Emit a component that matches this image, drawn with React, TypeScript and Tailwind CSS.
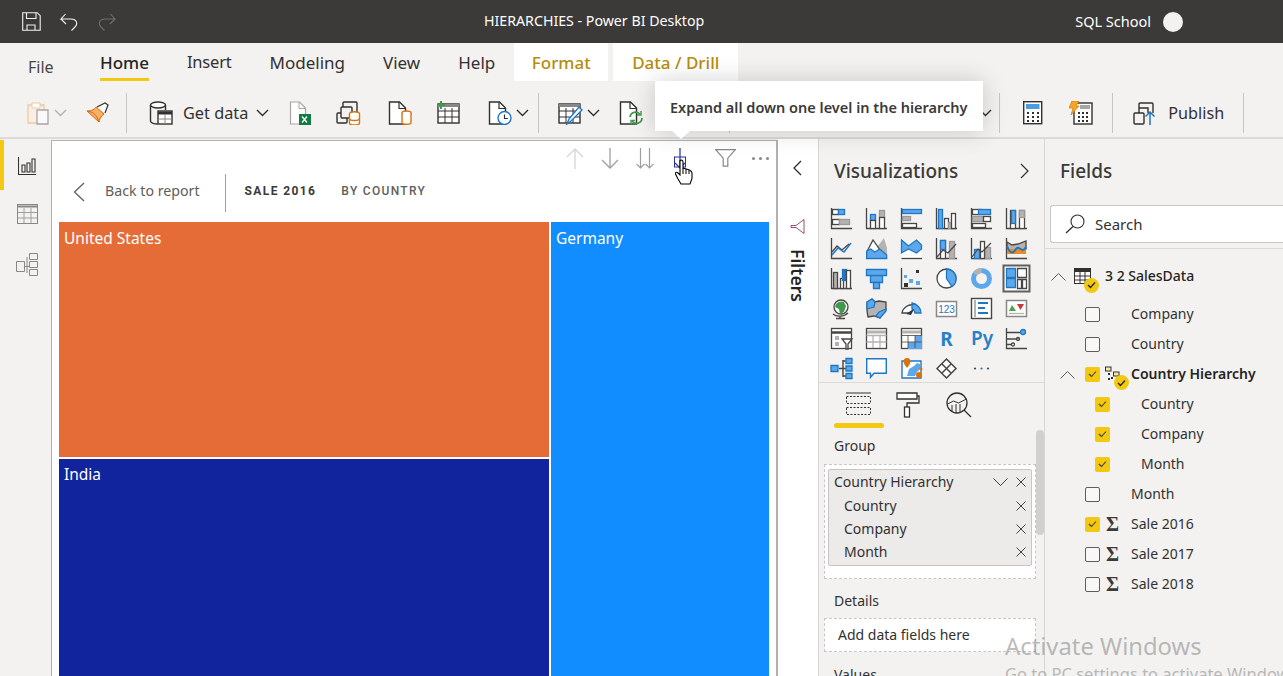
import type { ReactNode } from "react";

const D = "#484644";
const B = "#5ea7ea";
const BS = "#1f77c4";
const G = "#b5b3b1";

type SvgProps = { children: ReactNode; size?: number; box?: number; className?: string };

const Svg = ({ children, size = 21, box = 21, className = "" }: SvgProps) => (
  <svg width={size} height={size} viewBox={`0 0 ${box} ${box}`} fill="none" strokeWidth="1.3" className={`shrink-0 ${className}`}>
    {children}
  </svg>
);

const Axis = () => <path d="M.5 0v20.500H21" stroke={D} />;
const Rc = ({ x, y, w, h, f = "#fff", s = D }: { x: number; y: number; w: number; h: number; f?: string; s?: string }) => (
  <rect x={x + 0.5} y={y + 0.5} width={w} height={h} fill={f} stroke={s} />
);

const vizIcons: ReactNode[] = [
  <><Axis /><Rc x={1} y={1} w={6} h={5} /><Rc x={7} y={1} w={6} h={5} f={B} s={BS} /><Rc x={1} y={11} w={7} h={5} /><Rc x={8} y={11} w={10} h={5} f={G} s="#999" /></>,
  <><Axis /><Rc x={4} y={6} w={5} h={6} f={B} s={BS} /><Rc x={4} y={12} w={5} h={8} /><Rc x={13} y={2} w={5} h={7} f={G} s="#999" /><Rc x={13} y={9} w={5} h={11} /></>,
  <><Axis /><Rc x={1} y={1} w={19} h={4} f={B} s={BS} /><Rc x={1} y={8} w={8} h={4} f={G} s="#999" /><Rc x={1} y={15} w={14} h={4} /></>,
  <><Axis /><Rc x={2} y={1} w={4} h={19} f={B} s={BS} /><Rc x={8} y={10} w={4} h={10} /><Rc x={12} y={14} w={3} h={6} f={G} s="#999" /><Rc x={15} y={5} w={4} h={15} /></>,
  <><Axis /><Rc x={1} y={1} w={9} h={5} /><Rc x={7} y={1} w={12} h={5} f={B} s={BS} /><Rc x={1} y={8} w={11} h={5} f={G} s="#999" /><Rc x={12} y={8} w={7} h={5} /><Rc x={1} y={15} w={13} h={4} /></>,
  <><Axis /><Rc x={4} y={2} w={5} h={18} /><Rc x={5} y={2} w={4} h={13} f={B} s={BS} /><Rc x={13} y={2} w={5} h={18} /><Rc x={13} y={2} w={5} h={7} f={G} s="#999" /></>,
  <><Axis /><path d="M1 14l5-6 5 4 7-6" stroke={D} /><path d="M1 17l6-7 6 4 7-9" stroke={BS} strokeWidth="1.400" /></>,
  <><path d="M12 8l6-8 3 10v10h-9z" fill={G} /><path d="M.7 14L7 2l7 10v8H.7z" fill="#fff" stroke={D} /><path d="M.7 13l4-2 4 3 5-3 7 6v3.500H.7z" fill={B} stroke={BS} /></>,
  <><path d="M.5 15l7-4 8 4 5-4v9.500H.5z" fill="#fff" /><path d="M.5 2l7 6 8-6 5 5v4l-5 4-8-4-7 4z" fill={B} stroke={BS} /><path d="M.5 20.500H21" stroke={D} /></>,
  <><Axis /><Rc x={4} y={2} w={5} h={18} /><Rc x={4} y={2} w={5} h={9} f={B} s={BS} /><Rc x={13} y={3} w={5} h={17} f={G} s="#999" /><path d="M1 19l6-7 5 3 8-9" stroke={D} strokeWidth="1.200" /></>,
  <><Axis /><Rc x={3} y={11} w={5} h={9} f={B} s={BS} /><Rc x={9} y={3} w={4} h={17} /><Rc x={14} y={9} w={5} h={11} f={G} s="#999" /><path d="M1 19l6-8 4 3 9-9" stroke={D} strokeWidth="1.200" /></>,
  <><Axis /><path d="M1 4l5 3 6-1 8-3v8l-8 3-6-2-5 2z" fill={G} stroke={D} /><path d="M1 11h19v5H1z" fill="#ee8a1f" /><path d="M1 8c3 8 6 8 9 3s6 6 10-2" stroke={BS} strokeWidth="2" /></>,
  <><Axis /><Rc x={2} y={4} w={4} h={16} f={G} s={D} /><Rc x={9} y={10} w={3} h={10} /><Rc x={11} y={1} w={4} h={11} f={BS} s={BS} /><Rc x={15} y={2} w={4} h={18} /></>,
  <><path d="M.5 1.500h20v6h-20zM4.500 7.500h12v7h-12z" fill={B} stroke={BS} /><path d="M7.500 14.500h6v6h-6z" fill={B} stroke={BS} /></>,
  <><Axis /><rect x="3" y="7" width="3" height="3" fill={B} /><rect x="8" y="11" width="4" height="4" fill={B} /><rect x="15" y="13" width="4" height="4" fill={B} /><rect x="3" y="15" width="4" height="4" fill="#333" /><rect x="15" y="2" width="3" height="3" fill="#333" /></>,
  <><circle cx="10.500" cy="10.500" r="9.500" fill="#fff" stroke={D} /><path d="M10.500 1A9.500 9.500 0 0 1 20 10.500a9 9 0 0 1-4 8L10.500 10.500z" fill={B} stroke={BS} /></>,
  <><circle cx="10.500" cy="10.500" r="8" stroke={B} strokeWidth="5" /><path d="M10.500 2.500A8 8 0 0 0 4 6" stroke={G} strokeWidth="5" /></>,
  <><rect x="-2.500" y="-2.500" width="26" height="26" fill="#fff" stroke="#605e5c" strokeWidth="2" /><path d="M.5.500h9v9h-9zM.5 10.500h9v9h-9z" fill={B} stroke={BS} /><path d="M11.500.5h9v9h-9zM11.500 11.500h4v9h-4zM16.500 11.500h4v9h-4z" fill="#fff" stroke={D} /></>,
  <><circle cx="10" cy="9" r="7" fill="#fff" stroke={D} /><path d="M5 6c3-3 6-3 8-2l2 4-2 6-4 2-1-5-4-2z" fill="#3f9a4b" /><path d="M2 16c3 3 11 3 15-1M9 18v2M5 20.500h9" stroke={D} strokeWidth="1.300" /></>,
  <><path d="M1 4l5-3 3 3 4-1 7 1v8l-6 8-6-2-6 1-1-6z" fill={G} stroke={D} /><path d="M1 4l5-3 3 3-1 5-7 2z" fill={B} stroke={BS} /><path d="M13 14l7-3v2l-6 7-4-2z" fill={B} stroke={BS} /></>,
  <><path d="M1 15a10 10 0 0 1 12-8l-1 5-4 3H1z" fill="#fff" stroke={D} /><path d="M11 5c5 1 9 5 9 10h-6c0-2-1-3-3-4z" fill={B} stroke={BS} /><path d="M5 16l8-5-3 6z" fill="#333" /></>,
  <><rect x=".5" y="3.500" width="20" height="15" fill="#fff" stroke="#8a8886" strokeWidth="1.500" /><text x="10.500" y="15" textAnchor="middle" fontSize="10" fill={BS} fontFamily="Liberation Sans, sans-serif">123</text></>,
  <><rect x=".5" y=".5" width="20" height="20" fill="#fff" stroke={D} strokeWidth="1.400" /><path d="M4 2v17" stroke={G} strokeWidth="2" /><path d="M7 5h10M7 10h7M7 15h10" stroke={BS} strokeWidth="2" /></>,
  <><rect x=".5" y="2.500" width="20" height="16" fill="#fff" stroke="#8a8886" strokeWidth="1.500" /><path d="M3 13l3-6 4 6z" fill="#4fa04f" /><path d="M11 6h7l-3.500 6z" fill="#d13438" /><path d="M3 15.500h15" stroke={G} /></>,
  <><rect x=".5" y=".5" width="20" height="20" fill="#fff" stroke={D} strokeWidth="1.300" /><path d="M1 4.500h19" stroke={D} strokeWidth="2.500" /><path d="M4 8h4v4H4zM4 14h4v4H4z" fill={G} /><path d="M11 11h10l-4 5v5h-2v-5z" fill="#fff" stroke={D} /></>,
  <><rect x=".5" y=".5" width="20" height="20" fill="#fff" stroke={D} /><path d="M1 4h19" stroke={G} strokeWidth="3" /><path d="M.5 7.500h20M.5 14h20M7 7v13M14 7v13" stroke={G} /></>,
  <><rect x=".5" y=".5" width="20" height="20" fill="#fff" stroke={D} /><path d="M1 4h19" stroke={G} strokeWidth="3" /><path d="M7 14h14v7H7zM14 7.500h7V14h-7z" fill={B} /><path d="M.5 7.500h20M.5 14h20M7 7v13M14 7v13" stroke={D} strokeWidth=".8" /></>,
  <><text x="10.500" y="18" textAnchor="middle" fontSize="19" fontWeight="700" fill="#2680c9" fontFamily="Noto Sans, sans-serif">R</text></>,
  <><text x="11" y="17" textAnchor="middle" fontSize="19" fontWeight="600" fill="#2680c9" fontFamily="Noto Sans, sans-serif">Py</text></>,
  <><path d="M.5 0v20.500H21M1 4.500h14M1 11h10M1 16.500h6" stroke={D} /><circle cx="17" cy="4" r="2.500" fill={B} stroke={BS} /><circle cx="12" cy="11" r="1.500" fill={G} stroke={D} /><circle cx="7" cy="16.500" r="1.500" fill="#fff" stroke={D} /></>,
  <><path d="M8 10.500h4M12 2v17M12 3h3M12 10.500h3M12 18h3" stroke={D} strokeWidth="1.400" /><path d="M0 7.500h7v6H0zM15 .5h6v5h-6zM15 8h6v5h-6zM15 15.500h6v5h-6z" fill={B} stroke={BS} /></>,
  <><path d="M.7.7h19.600v14.600H8l-3.500 4v-4H.7z" fill="#fff" stroke={BS} strokeWidth="1.400" /></>,
  <><path d="M1 3h19v17H1z" fill="#fff" stroke={BS} strokeWidth="1.400" /><path d="M8 11l5-3 3-3 3 1v5l-3 3-2 4H6z" fill={B} /><path d="M6 0a3.500 3.500 0 0 1 3.500 3.500C9.500 6 6 10 6 10S2.500 6 2.500 3.500A3.500 3.500 0 0 1 6 0z" fill="#d9730d" /><circle cx="18" cy="17" r="3" fill="#d9730d" /><circle cx="20" cy="11" r="1.500" fill="#d9730d" /></>,
  <><path d="M10.500 1L20 10.500 10.500 20 1 10.500z" fill="#fff" stroke={D} strokeWidth="1.500" /><path d="M6 6l9 9M15 6l-9 9" stroke={D} strokeWidth="1.500" /></>,
  <><circle cx="4" cy="10.500" r="1.100" fill={D} /><circle cx="10.500" cy="10.500" r="1.100" fill="#1f77c4" /><circle cx="17" cy="10.500" r="1.100" fill={D} /></>,
];

const Chevron = ({ color = "#323130", className = "" }: { color?: string; className?: string }) => (
  <svg width="13" height="8" viewBox="0 0 13 8" fill="none" className={`shrink-0 ${className}`}>
    <path d="M1 1l5.500 5.500L12 1" stroke={color} strokeWidth="1.400" />
  </svg>
);

const ChevronUp = () => (
  <svg width="15" height="9" viewBox="0 0 15 9" fill="none" className="shrink-0">
    <path d="M.5 8.500l7-7 7 7" stroke="#605e5c" />
  </svg>
);

const Sep = ({ className = "" }: { className?: string }) => <div className={`h-[40px] w-px shrink-0 bg-[#c8c6c4] ${className}`} />;

const Doc = ({ children }: { children?: ReactNode }) => (
  <svg width="24" height="24" viewBox="0 0 24 24" fill="none" className="shrink-0">
    <path d="M1.500 1h10l6 6v16h-16z" fill="#fff" stroke="#323130" strokeWidth="1.400" />
    <path d="M11 1v6.500h6.500" stroke="#323130" strokeWidth="1.200" />
    {children}
  </svg>
);

const Box = ({ x, y, w = 9, h = 9 }: { x: number; y: number; w?: number; h?: number }) => (
  <rect x={x} y={y} width={w} height={h} rx="1" fill="#f3f2f1" stroke="#323130" strokeWidth="1.400" />
);

const TableGlyph = ({ s = "#323130" }: { s?: string }) => (
  <>
    <rect x="1" y="3" width="21" height="19" fill="#fff" stroke={s} strokeWidth="1.400" />
    <path d="M1 4.500h21" stroke="#8a8886" strokeWidth="3" />
    <path d="M1 10h21M1 16h21M8 7v15M15 7v15" stroke={s} />
  </>
);

const Toolbar = () => (
  <div className="flex h-[58px] items-center border-b-2 border-[#dcdad8] pl-[26px] pt-[8px]">
    <svg width="24" height="24" viewBox="0 0 24 24" fill="none" className="shrink-0">
      <path d="M2 4h16v18H2z" fill="#fbeee2" stroke="#f0c9a4" strokeWidth="1.300" />
      <path d="M6 2h8v5H6z" fill="#fff" stroke="#f0c9a4" />
      <path d="M11 9h11v14H11z" fill="#fafafa" stroke="#a8a6a4" strokeWidth="1.300" />
    </svg>
    <Chevron color="#b3b1af" className="ml-[4px]" />
    <svg width="24" height="22" viewBox="0 0 24 22" fill="none" className="ml-[19px] shrink-0">
      <path d="M1 9c5 0 8-2 9-4l8 7c-3 2-5 6-5 8z" fill="#f7b267" stroke="#d46b08" />
      <path d="M1 9c5 1 9 2 12 11" stroke="#d46b08" />
      <path d="M11 5l8-4 3 2-3 8" fill="#fff" stroke="#323130" strokeWidth="1.200" />
    </svg>
    <Sep className="ml-[16px]" />
    <svg width="24" height="24" viewBox="0 0 24 24" fill="none" className="ml-[22px] shrink-0">
      <ellipse cx="9" cy="4" rx="7.500" ry="3" fill="#fff" stroke="#323130" strokeWidth="1.400" />
      <path d="M1.500 4v16c0 1.500 3 3 7 3M16.500 4v5" stroke="#323130" strokeWidth="1.400" />
      <rect x="9" y="10" width="14" height="13" fill="#fff" stroke="#323130" strokeWidth="1.400" />
      <path d="M9 12h14" stroke="#323130" strokeWidth="3" />
      <path d="M16 13v10M9 18h14" stroke="#8a8886" />
    </svg>
    <span className="ml-[10px] text-[16.300px] leading-none text-[#323130]">Get data</span>
    <Chevron className="ml-[8px]" />
    <div className="ml-[20px]">
      <svg width="22" height="24" viewBox="0 0 22 24" fill="none" className="shrink-0">
        <path d="M1.500 1h9l6 6v16h-15z" fill="#fff" stroke="#a8a6a4" strokeWidth="1.200" />
        <path d="M10 1v6.500h6.500" stroke="#a8a6a4" />
        <rect x="10" y="13" width="12" height="11" fill="#107c41" />
        <path d="M13 15.500l5 6M18 15.500l-5 6" stroke="#fff" strokeWidth="1.300" />
      </svg>
    </div>
    <svg width="25" height="24" viewBox="0 0 25 24" fill="none" className="ml-[25px] shrink-0">
      <Box x={1} y={12} w={10} h={10} />
      <Box x={7} y={1} w={14} h={12} />
      <Box x={5} y={6} w={11} h={11} />
      <ellipse cx="18.500" cy="13" rx="5" ry="2.200" fill="#fff" stroke="#d9730d" strokeWidth="1.400" />
      <path d="M13.500 13v9c0 1 2 2 5 2s5-1 5-2v-9M13.500 17.500c0 1 2 2 5 2s5-1 5-2" fill="#fff" stroke="#d9730d" strokeWidth="1.400" />
    </svg>
    <div className="ml-[27px]">
      <Doc>
        <ellipse cx="18.500" cy="12" rx="4.500" ry="2" fill="#fff" stroke="#d9730d" strokeWidth="1.400" />
        <path d="M14 12v9.500c0 1 2 1.800 4.500 1.800s4.500-.8 4.500-1.800V12" fill="#fff" stroke="#d9730d" strokeWidth="1.400" />
      </Doc>
    </div>
    <svg width="24" height="24" viewBox="0 0 24 24" fill="none" className="ml-[25px] shrink-0">
      <TableGlyph />
      <path d="M4 0v8M0 4h8" stroke="#3f9a4b" strokeWidth="2" />
    </svg>
    <div className="ml-[27px]">
      <Doc>
        <circle cx="16.500" cy="17" r="6.500" fill="#fff" stroke="#1f77c4" strokeWidth="1.400" />
        <path d="M16.500 13.500V17.500h3.500" stroke="#323130" strokeWidth="1.200" />
      </Doc>
    </div>
    <Chevron className="ml-[4px]" />
    <Sep className="ml-[9px]" />
    <svg width="25" height="24" viewBox="0 0 25 24" fill="none" className="ml-[19px] shrink-0">
      <TableGlyph />
      <path d="M9 23l2-5L21 6l3 3-11 11z" fill="#fff" stroke="#1f77c4" strokeWidth="1.400" />
    </svg>
    <Chevron className="ml-[4px]" />
    <div className="ml-[19px]">
      <Doc>
        <path d="M11 16a5.500 5.500 0 0 1 10-2.500M23 17a5.500 5.500 0 0 1-10 3" stroke="#3f9a4b" strokeWidth="1.800" />
        <path d="M22 10v4h-4M12 23.500v-4h4" stroke="#3f9a4b" strokeWidth="1.400" />
      </Doc>
    </div>
    <Sep className="ml-[86px]" />
    <Chevron className="ml-[249px]" />
    <Sep className="ml-[7px]" />
    <svg width="20" height="24" viewBox="0 0 20 24" fill="none" className="ml-[23px] shrink-0">
      <rect x=".7" y=".7" width="18" height="22" fill="#fff" stroke="#323130" strokeWidth="1.400" />
      <rect x="3" y="3" width="13.500" height="5" fill="#4a9de0" />
      <path d="M4 11h2v2H4zM9 11h2v2H9zM14 11h2v2h-2zM4 15h2v2H4zM9 15h2v2H9zM14 15h2v2h-2zM4 19h2v2H4zM9 19h2v2H9zM14 19h2v2h-2z" fill="#323130" />
    </svg>
    <svg width="24" height="24" viewBox="0 0 24 24" fill="none" className="ml-[26px] shrink-0">
      <rect x="5" y="2" width="18" height="21" fill="#fff" stroke="#323130" strokeWidth="1.400" />
      <rect x="11" y="4" width="10" height="4" fill="#a8a6a4" />
      <path d="M9 11h2v2H9zM13 11h2v2h-2zM17 11h2v2h-2zM9 15h2v2H9zM13 15h2v2h-2zM17 15h2v2h-2zM9 19h2v2H9zM13 19h2v2h-2zM17 19h2v2h-2z" fill="#323130" />
      <path d="M3 0h7L7 5h3l-8 9 2-7H0z" fill="#f7a823" stroke="#d9730d" strokeWidth=".7" />
    </svg>
    <Sep className="ml-[19px]" />
    <svg width="24" height="24" viewBox="0 0 24 24" fill="none" className="ml-[20px] shrink-0">
      <Box x={1} y={12} w={10} h={11} />
      <path d="M6 12V3a1 1 0 0 1 1-1h12a1 1 0 0 1 1 1v9" stroke="#323130" strokeWidth="1.400" />
      <path d="M6 7h9v5" stroke="#323130" strokeWidth="1.400" />
      <path d="M17 24V11M12.500 15.500L17 11l4.500 4.500" stroke="#1f77c4" strokeWidth="1.500" />
    </svg>
    <span className="ml-[11px] text-[16.200px] leading-none text-[#323130]">Publish</span>
    <Sep className="ml-[19px]" />
  </div>
);

const Check = ({ on, className = "" }: { on?: boolean; className?: string }) =>
  on ? (
    <div className={`flex size-[15px] shrink-0 items-center justify-center rounded-[2px] bg-[#f2c811] ${className}`}>
      <svg width="9" height="8" viewBox="0 0 9 8" fill="none">
        <path d="M1 4l2.500 2.500L8 1.500" stroke="#3b3a39" strokeWidth="1.100" />
      </svg>
    </div>
  ) : (
    <div className={`size-[15px] shrink-0 rounded-[2px] border border-[#605e5c] bg-[#f8f8f8] ${className}`} />
  );

const Badge = () => (
  <div className="absolute bottom-[-8px] right-[-8px] flex size-[15px] items-center justify-center rounded-full bg-[#f2c811]">
    <svg width="9" height="8" viewBox="0 0 9 8" fill="none">
      <path d="M1 4l2.500 2.500L8 1.500" stroke="#252423" strokeWidth="1.300" />
    </svg>
  </div>
);

const Sigma = () => <span className="mr-[9px] font-['Liberation_Serif',serif] text-[20px] font-bold leading-none text-[#3b3a39]">Σ</span>;

const Field = ({ label, on, child, icon, chevron, bold }: { label: string; on?: boolean; child?: boolean; icon?: ReactNode; chevron?: boolean; bold?: boolean }) => (
  <div className={`flex h-[30px] items-center ${child ? "pl-[10px]" : ""}`}>
    <div className="flex w-[40px] shrink-0 justify-end pr-[10px]">{chevron && <ChevronUp />}</div>
    <Check on={on} />
    <div className="flex w-[31px] shrink-0 justify-center pl-[3px]">{icon}</div>
    <span className={`text-[14px] leading-none ${bold ? "font-semibold text-[#252423]" : "text-[#323130]"}`}>{label}</span>
  </div>
);

const Cross = () => (
  <svg width="10" height="10" viewBox="0 0 10 10" fill="none" className="shrink-0">
    <path d="M.5.500l9 9M9.500.500l-9 9" stroke="#323130" strokeWidth=".9" />
  </svg>
);

const WellRow = ({ label }: { label: string }) => (
  <div className="flex h-[23px] items-center justify-between pl-[15px] pr-[5px]">
    <span className="text-[14px] leading-none text-[#323130]">{label}</span>
    <Cross />
  </div>
);

const VizPane = () => (
  <div className="relative w-[227px] shrink-0 border-x border-[#d8d6d4] bg-[#f3f2f1] pt-[20px]">
    <div className="flex h-[24px] items-center justify-between pl-[15px] pr-[15px]">
      <span className="text-[19px] font-medium leading-none text-[#3b3a39]">Visualizations</span>
      <svg width="9" height="16" viewBox="0 0 9 16" fill="none"><path d="M1 1l7 7-7 7" stroke="#323130" strokeWidth="1.200" /></svg>
    </div>
    <div className="ml-[5px] mt-[20px] grid grid-cols-[repeat(6,35px)] auto-rows-[30px]">
      {vizIcons.map((icon, i) => (
        <div key={i} className="flex items-center justify-center">
          <Svg className="overflow-visible">{icon}</Svg>
        </div>
      ))}
    </div>
    <div className="mt-[-1px] border-b border-[#dcdad8]" />
    <div className="flex h-[46px] items-start pl-[15px] pt-[9px]">
      <div className="flex w-[50px] flex-col items-center">
        <svg width="26" height="26" viewBox="0 0 26 26" fill="none">
          <path d="M0 1h25" stroke="#323130" />
          <path d="M.5 4.500h24v7h-24zM.5 15.500h24v7h-24z" stroke="#323130" strokeDasharray="2 1.500" />
        </svg>
        <div className="mt-[5px] h-[5px] w-[50px] rounded-full bg-[#f2c811]" />
      </div>
      <svg width="24" height="26" viewBox="0 0 24 26" fill="none" className="ml-[12px]">
        <path d="M1 1h20v6H1z" fill="#fff" stroke="#323130" strokeWidth="1.300" />
        <path d="M21 4h2v7H11v5" stroke="#323130" strokeWidth="1.300" />
        <rect x="8.500" y="15" width="5" height="10" fill="#fff" stroke="#323130" strokeWidth="1.300" />
      </svg>
      <svg width="26" height="26" viewBox="0 0 26 26" fill="none" className="ml-[26px]">
        <circle cx="11" cy="11" r="10" fill="#f3f2f1" stroke="#323130" strokeWidth="1.300" />
        <path d="M1.500 12l6-3 5 2 8-4" stroke="#323130" />
        <path d="M6 13v7M10 12v9M14 12v8" stroke="#323130" />
        <path d="M18 18l7 7" stroke="#323130" strokeWidth="1.300" />
      </svg>
    </div>
    <div className="ml-[15px] mt-[7px] text-[14px] leading-[20px] text-[#323130]">Group</div>
    <div className="ml-[5px] mt-[8px] h-[115px] w-[212px] border border-dashed border-[#c8c6c4] bg-white p-[3px] pt-[4px]">
      <div className="h-[97px] rounded-[2px] border border-[#c8c6c4] bg-[#edebe9]">
        <div className="flex h-[24px] items-center justify-between pl-[5px] pr-[5px]">
          <span className="text-[14px] leading-none text-[#323130]">Country Hierarchy</span>
          <div className="flex items-center gap-[8px]">
            <svg width="15" height="8" viewBox="0 0 15 8" fill="none"><path d="M.5.500l7 7 7-7" stroke="#323130" strokeWidth=".9" /></svg>
            <Cross />
          </div>
        </div>
        <WellRow label="Country" />
        <WellRow label="Company" />
        <WellRow label="Month" />
      </div>
    </div>
    <div className="ml-[15px] mt-[12px] text-[14px] leading-[20px] text-[#323130]">Details</div>
    <div className="ml-[5px] mt-[7px] flex h-[34px] w-[212px] items-center border border-dashed border-[#c8c6c4] bg-white pl-[13px]">
      <span className="text-[14px] leading-none text-[#323130]">Add data fields here</span>
    </div>
    <div className="ml-[15px] mt-[13px] text-[14px] leading-[20px] text-[#323130]">Values</div>
    <div className="absolute right-0 top-[291px] h-[105px] w-[8px] rounded-[4px] bg-[#d2d0ce]" />
  </div>
);

const FieldsPane = () => (
  <div className="flex-1 bg-[#f3f2f1] pt-[20px]">
    <div className="flex h-[24px] items-center pl-[15px] text-[19px] font-medium leading-none text-[#3b3a39]">Fields</div>
    <div className="ml-[5px] mt-[22px] flex h-[38px] items-center rounded-l-[3px] border border-r-0 border-[#c8c6c4] bg-white pl-[14px]">
      <svg width="20" height="20" viewBox="0 0 20 20" fill="none">
        <circle cx="12.500" cy="7.500" r="6.500" stroke="#323130" strokeWidth="1.100" />
        <path d="M8 12.500L1 19" stroke="#323130" strokeWidth="1.300" />
      </svg>
      <span className="ml-[10px] text-[15px] leading-none text-[#323130]">Search</span>
    </div>
    <div className="mt-[5px] border-b border-[#dcdad8]" />
    <div className="mt-[12px] flex h-[30px] items-center">
      <div className="flex w-[21px] justify-end"><ChevronUp /></div>
      <div className="relative ml-[8px] size-[17px]">
        <svg width="17" height="17" viewBox="0 0 17 17" fill="none">
          <rect x=".5" y=".5" width="16" height="15" fill="#fff" stroke="#323130" />
          <path d="M1 2.500h15" stroke="#323130" strokeWidth="3" />
          <path d="M1 8h15M1 12h15M6 4v12M11 4v12" stroke="#323130" />
        </svg>
        <Badge />
      </div>
      <span className="ml-[14px] text-[14px] font-medium leading-none text-[#252423]">3 2 SalesData</span>
    </div>
    <div className="mt-[8px]">
      <Field label="Company" />
      <Field label="Country" />
      <Field
        label="Country Hierarchy"
        on
        chevron
        bold
        icon={
          <div className="relative mr-[8px] size-[16px]">
            <svg width="16" height="16" viewBox="0 0 16 16" fill="none">
              <rect x=".5" y="1" width="5.500" height="4" fill="#f8e9a8" stroke="#323130" />
              <rect x="8.500" y="6" width="5.500" height="4" fill="#f8e9a8" stroke="#323130" />
              <path d="M3 7h2v2H3zM3 12h2v2H3zM6 11h2v2H6z" fill="#323130" />
            </svg>
            <Badge />
          </div>
        }
      />
      <Field label="Country" on child />
      <Field label="Company" on child />
      <Field label="Month" on child />
      <Field label="Month" />
      <Field label="Sale 2016" on icon={<Sigma />} />
      <Field label="Sale 2017" icon={<Sigma />} />
      <Field label="Sale 2018" icon={<Sigma />} />
    </div>
  </div>
);

const App = () => (
  <div className="relative h-[676px] w-[1283px] overflow-hidden bg-[#f3f2f1] font-['Noto_Sans','Open_Sans',sans-serif]">
    {/* title bar */}
    <div className="flex h-[43px] items-center bg-[#3b3a38] pl-[22px] text-white">
      <svg width="19" height="19" viewBox="0 0 19 19" fill="none">
        <path d="M.7.700h14.500l3 3v14.600H.7zM4.500 1v5.500h9.500V1M5 18v-5h8v5" stroke="#f3f2f1" strokeWidth="1.100" />
      </svg>
      <svg width="18" height="18" viewBox="0 0 18 18" fill="none" className="ml-[19px]">
        <path d="M5.500 1L1 6h10c6 0 7 5 4 8l-3.500 3.500M1 6l5 5" stroke="#f3f2f1" strokeWidth="1.100" />
      </svg>
      <svg width="18" height="18" viewBox="0 0 18 18" fill="none" className="ml-[20px]">
        <path d="M12.500 1L17 6H7c-6 0-7 5-4 8l3.500 3.500M17 6l-5 5" stroke="#6f6d6b" strokeWidth="1.100" />
      </svg>
      <span className="ml-[368px] text-[14.200px] leading-none">HIERARCHIES - Power BI Desktop</span>
      <span className="ml-auto text-[14.500px] leading-none">SQL School</span>
      <div className="ml-[12px] mr-[100px] size-[20px] rounded-full bg-[#f3f2f1]" />
    </div>
    {/* ribbon tabs */}
    <div className="flex h-[38px] items-stretch text-[#323130]">
      <div className="ml-[28px] flex w-[72px] items-center pt-[10px] text-[16px] leading-none text-[#484644]">File</div>
      <div className="relative flex items-center text-[17px] font-medium leading-none text-[#252423]">
        Home
        <div className="absolute bottom-0 left-0 h-[3px] w-full bg-[#f2c811]" />
      </div>
      <div className="ml-[38px] flex items-center text-[16.500px] leading-none tracking-[-0.2px]">Insert</div>
      <div className="ml-[38px] flex items-center text-[17px] leading-none">Modeling</div>
      <div className="ml-[38px] flex items-center text-[17px] leading-none">View</div>
      <div className="ml-[38px] flex items-center text-[17px] leading-none">Help</div>
      <div className="ml-[19px] flex w-[94px] items-center justify-center bg-white text-[17px] font-medium leading-none text-[#b58d10]">Format</div>
      <div className="ml-[5px] flex w-[125px] items-center justify-center bg-white text-[17px] font-medium leading-none text-[#b58d10]">Data / Drill</div>
    </div>
    <Toolbar />
    {/* main area */}
    <div className="flex h-[537px]">
      <div className="relative flex w-[51px] shrink-0 flex-col items-center pl-[3px] pt-[18px]">
        <div className="absolute left-0 top-[1px] h-[50px] w-[4px] bg-[#f2c811]" />
        <svg width="18" height="18" viewBox="0 0 18 18" fill="none">
          <path d="M.5 0v17.500H18M4 8h3v7H4zM9 6h3v9H9zM14 2h3v13h-3z" stroke="#323130" strokeWidth="1.100" />
        </svg>
        <svg width="21" height="20" viewBox="0 0 21 20" fill="none" className="mt-[29px]">
          <rect x=".5" y=".5" width="20" height="19" stroke="#8a8886" />
          <path d="M1 2.500h19" stroke="#8a8886" strokeWidth="2" />
          <path d="M1 8.500h19M1 14h19M7 4v15M14 4v15" stroke="#a19f9d" />
        </svg>
        <svg width="23" height="23" viewBox="0 0 23 23" fill="none" className="mt-[29px]">
          <path d="M.5 8.500h8v10h-8zM13.500.5h8v6h-8zM13.500 8.500h8v6h-8zM13.500 16.500h8v6h-8zM8.500 13.500h5M11 4v16" stroke="#8a8886" />
        </svg>
      </div>
      {/* canvas */}
      <div className="mt-[1px] flex w-[727px] shrink-0 flex-col border-l border-r-2 border-t border-l-[#b3b1af] border-r-[#b3b1af] border-t-[#b3b1af] bg-white">
        <div className="flex h-[34px] shrink-0 items-center pl-[514px]">
          <svg width="18" height="21" viewBox="0 0 18 21" fill="none"><path d="M9 21V1M1 9l8-8 8 8" stroke="#d8d6d4" strokeWidth="1.300" /></svg>
          <svg width="18" height="21" viewBox="0 0 18 21" fill="none" className="ml-[17px]"><path d="M9 0v20M1 12l8 8 8-8" stroke="#a19f9d" strokeWidth="1.300" /></svg>
          <svg width="18" height="21" viewBox="0 0 18 21" fill="none" className="ml-[17px]">
            <path d="M4.500 0v20M.5 16l4 4 4-4M13.500 0v20M9.500 16l4 4 4-4" stroke="#a19f9d" strokeWidth="1.200" />
          </svg>
          <svg width="16" height="21" viewBox="0 0 16 21" fill="none" className="ml-[18px]">
            <path d="M8 0v19M3 15l5 5 5-5" stroke="#2b2f9e" strokeWidth="1.200" />
            <rect x="2.500" y="9" width="11" height="10" stroke="#2b2f9e" />
          </svg>
          <svg width="21" height="18" viewBox="0 0 21 18" fill="none" className="ml-[27px]"><path d="M.7.700h19.600l-7.500 8.500v8h-4.600v-8z" stroke="#8a8886" strokeWidth="1.200" /></svg>
          <div className="ml-[16px] flex gap-[4px]">
            <div className="size-[3px] rounded-full bg-[#8a8886]" />
            <div className="size-[3px] rounded-full bg-[#8a8886]" />
            <div className="size-[3px] rounded-full bg-[#8a8886]" />
          </div>
        </div>
        <div className="-mt-[1px] flex h-[38px] shrink-0 items-center pl-[21px]">
          <svg width="12" height="20" viewBox="0 0 12 20" fill="none" className="mb-[2px]"><path d="M11 1L1.500 10l9.500 9" stroke="#605e5c" strokeWidth="1.300" /></svg>
          <span className="mb-[4px] ml-[20px] text-[14.200px] leading-none text-[#605e5c]">Back to report</span>
          <div className="ml-[25px] h-[38px] w-px bg-[#a19f9d]" />
          <span className="mb-[4px] ml-[19px] font-['Roboto',sans-serif] text-[12px] font-bold leading-none tracking-[1.400px] text-[#3b3a39]">SALE 2016</span>
          <span className="mb-[4px] ml-[25px] font-['Roboto',sans-serif] text-[12px] font-medium leading-none tracking-[1.300px] text-[#605e5c]">BY COUNTRY</span>
        </div>
        <div className="mt-[10px] flex flex-1 gap-[2px] pl-[7px] pr-[7px] text-[15.500px] leading-none text-white">
          <div className="flex w-[490px] flex-col gap-[2px]">
            <div className="h-[235px] bg-[#e66c37] pl-[5px] pt-[9px]">United States</div>
            <div className="flex-1 bg-[#12239e] pl-[5px] pt-[8px]">India</div>
          </div>
          <div className="flex-1 bg-[#118dff] pl-[5px] pt-[9px]">Germany</div>
        </div>
      </div>
      {/* filters */}
      <div className="flex w-[40px] shrink-0 flex-col items-center bg-white pt-[21px]">
        <svg width="9" height="16" viewBox="0 0 9 16" fill="none" className="mr-[2px]"><path d="M8 1L1 8l7 7" stroke="#252423" strokeWidth="1.200" /></svg>
        <svg width="15" height="15" viewBox="0 0 15 15" fill="none" className="ml-[-2px] mt-[43px]"><path d="M14 .5v14L6 8.500H1v-2h5z" stroke="#8b3a62" strokeWidth=".9" /></svg>
        <span className="ml-[-1px] mt-[15px] text-[17.500px] font-semibold leading-none text-[#252423] [writing-mode:vertical-rl]">Filters</span>
      </div>
      <VizPane />
      <FieldsPane />
    </div>

    {/* tooltip over the ribbon */}
    <div className="absolute left-[655px] top-[81px] flex h-[50px] w-[328px] items-center bg-white pl-[15px] pt-[2px] text-[14.500px] font-semibold leading-none text-[#3b3a39] shadow-[0_0_24px_rgba(0,0,0,0.18)]">
      Expand all down one level in the hierarchy
    </div>
    <div className="absolute left-[672px] top-[131px] size-0 border-x-[9px] border-t-[8px] border-x-transparent border-t-white" />
    {/* hand cursor */}
    <svg width="18" height="26" viewBox="0 0 18 26" fill="none" className="absolute left-[675px] top-[159px]">
      <path d="M5 1.500c1.500-1 3 0 3 1.500v6l5 1.500c2.500.7 4 1.500 4 4v5L15 25H6l-3-5-2.500-5c-.5-1.500 1-2.500 2.500-1l2 2V3z" fill="#fff" stroke="#000" strokeWidth="1.100" />
      <path d="M8 9v6M11 10v5M14 11v4" stroke="#000" />
    </svg>
    {/* windows watermark */}
    <div className="pointer-events-none absolute left-[1005px] top-[631px] whitespace-nowrap text-[23.800px] leading-[30px] text-[#7a7a7a]/50">Activate Windows</div>
    <div className="pointer-events-none absolute left-[1005px] top-[664px] whitespace-nowrap text-[16.500px] leading-[20px] text-[#7a7a7a]/50">Go to PC settings to activate Windows.</div>
  </div>
);

export default App;
